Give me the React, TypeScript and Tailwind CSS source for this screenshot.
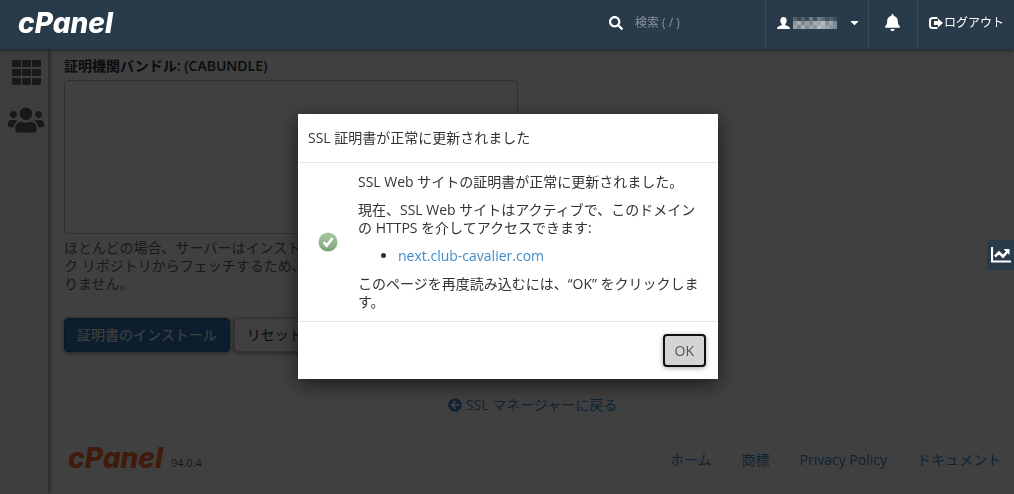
import { FaArrowCircleLeft, FaBell, FaCaretDown, FaSearch, FaUsers } from 'react-icons/fa';

const footerLinks = ['ホーム', '商標', 'Privacy Policy', 'ドキュメント'];

// shades of the masked user name, row by row
const maskRows = [
  ['#53616f', '#3a4958', '#53616f', '#3a4958', '#6d7986', '#46535f', '#6d7986', '#5c6976', '#46535f', '#53616f', '#3f4e5d'],
  ['#8b949e', '#a3abb3', '#7b8691', '#99a2ab', '#7b8691', '#a3abb3', '#9aa3ac', '#b4bac1', '#828d98', '#9aa3ac', '#7b8691'],
  ['#9aa3ac', '#7b8691', '#a3abb3', '#828d98', '#99a2ab', '#8b949e', '#b4bac1', '#a3abb3', '#9aa3ac', '#8b949e', '#828d98'],
];

function Wordmark({ className }: { className: string }) {
  return <span className={`font-[Inter] text-[28px] leading-7 font-extrabold italic ${className}`}>cPanel</span>;
}

function GridIcon() {
  return (
    <svg width="29" height="25" viewBox="0 0 29 25" fill="currentColor" aria-hidden="true">
      {[0, 9, 18].map((y) =>
        [0, 10, 20].map((x) => <rect key={`${x}-${y}`} x={x} y={y} width="9" height="7" rx="1" />),
      )}
    </svg>
  );
}

function UserIcon() {
  return (
    <svg width="13" height="12" viewBox="0 0 13 12" fill="currentColor" aria-hidden="true">
      <path d="M6.5 0C4.500 0 3.300 1.400 3.300 3.400c0 1.500.6 2.900 1.500 3.700v1L1 9.700Q0 10.200 0 12h13q0-1.800-1-2.300L8.200 8.100v-1c.9-.8 1.500-2.200 1.500-3.700C9.700 1.400 8.500 0 6.500 0z" />
    </svg>
  );
}

function LogoutIcon() {
  return (
    <svg width="14" height="12" viewBox="0 0 14 12" aria-hidden="true">
      <path d="M8.500 1H3.500Q1 1 1 3.500v5Q1 11 3.500 11h5" fill="none" stroke="currentColor" strokeWidth="2" />
      <path d="M9 1.500L14 6 9 10.500V8H5V4h4z" fill="currentColor" />
    </svg>
  );
}

function SuccessIcon() {
  return (
    <svg width="20" height="20" viewBox="0 0 20 20" role="img" aria-label="成功">
      <defs>
        <linearGradient id="ok-fill" x1="0" y1="0" x2="0" y2="1">
          <stop offset="0" stopColor="#a9c7a0" />
          <stop offset="1" stopColor="#7fa67b" />
        </linearGradient>
      </defs>
      <circle cx="10" cy="10" r="9.500" fill="url(#ok-fill)" />
      <path d="M.8 11.500a9.400 9.400 0 0 0 18.400 0A10 10 0 0 1 .8 11.500z" fill="#6f946d" opacity=".5" />
      <path d="M5.500 10l3.200 3.600L14.500 6" fill="none" stroke="#fff" strokeWidth="2.600" />
    </svg>
  );
}

function ChartIcon() {
  return (
    <svg width="20" height="16" viewBox="0 0 20 16" fill="none" stroke="#fff" aria-hidden="true">
      <path d="M1 0v14.500h19" strokeWidth="2.200" />
      <path d="M4 9.500l4-4 4 4 4-4.500" strokeWidth="2.600" />
      <path d="M12.500 2H18.500v6z" fill="#fff" stroke="none" />
    </svg>
  );
}

function Header() {
  return (
    <header className="relative z-30 flex h-[49px] items-stretch bg-[#293a4a] text-xs text-white shadow-[0_1px_4px_rgba(0,0,0,0.5)]">
      <a href="#" className="flex items-center pl-[18px]">
        <Wordmark className="pb-1 text-white" />
      </a>
      <label className="ml-auto flex w-[156px] items-center gap-3 pb-1">
        <FaSearch size={14} />
        <input
          type="search"
          aria-label="検索"
          placeholder="検索 ( / )"
          className="w-28 bg-transparent outline-none placeholder:text-[#8a9199]"
        />
      </label>
      <button type="button" aria-label="ユーザー" className="flex w-[103px] items-center gap-[3px] border-l border-[#364859] pb-1 pl-[11px]">
        <UserIcon />
        <svg width="44" height="12" viewBox="0 0 44 12" aria-hidden="true">
          {maskRows.map((row, y) =>
            row.map((fill, x) => <rect key={`${x}-${y}`} x={x * 4} y={y * 4} width="4" height="4" fill={fill} />),
          )}
        </svg>
        <FaCaretDown size={13} className="ml-2" />
      </button>
      <button type="button" aria-label="通知" className="flex w-[49px] items-center justify-center border-l border-[#364859] pb-1">
        <FaBell size={17} />
      </button>
      <a href="#" className="flex items-center gap-px border-l border-[#364859] pr-2.5 pb-1 pl-[11px]">
        <LogoutIcon />
        ログアウト
      </a>
    </header>
  );
}

function Sidebar() {
  return (
    <nav className="flex w-12 shrink-0 flex-col items-center gap-[17px] bg-[#f5f5f5] pt-[11px] pl-1 text-[#666] shadow-[1px_0_5px_rgba(0,0,0,0.5)]">
      <a href="#" aria-label="ツール">
        <GridIcon />
      </a>
      <a href="#" aria-label="ユーザー マネージャー">
        <FaUsers size={36} />
      </a>
    </nav>
  );
}

function SuccessDialog() {
  return (
    <div className="fixed inset-0 z-20 flex items-start justify-center bg-black/75 pt-[114px] pl-0.5">
      <div role="dialog" aria-labelledby="dialog-title" className="w-[420px] bg-white text-[#333] shadow-[0_5px_20px_rgba(0,0,0,0.6)]">
        <h2 id="dialog-title" className="border-b border-[#e5e5e5] px-2.5 py-[15px]">
          SSL 証明書が正常に更新されました
        </h2>
        <div className="flex items-center p-2.5">
          <div className="w-[50px] shrink-0 pl-2.5">
            <SuccessIcon />
          </div>
          <div className="flex flex-col gap-2.5">
            <p>SSL Web サイトの証明書が正常に更新されました。</p>
            <p>現在、SSL Web サイトはアクティブで、このドメインの HTTPS を介してアクセスできます:</p>
            <ul className="list-disc pl-10">
              <li>
                <a href="#" className="text-[#428bca]">next.club-cavalier.com</a>
              </li>
            </ul>
            <p>このページを再度読み込むには、“OK” をクリックします。</p>
          </div>
        </div>
        <div className="flex justify-end border-t border-[#e5e5e5] p-3">
          <button
            type="button"
            className="h-[33px] rounded border-2 border-[#101010] bg-[#d4d4d4] px-2.5 text-[#555] shadow-[0_1px_5px_rgba(0,0,0,0.35)]"
          >
            OK
          </button>
        </div>
      </div>
    </div>
  );
}

export default function App() {
  return (
    <div
      lang="ja"
      className="flex min-h-screen flex-col bg-white font-['Open_Sans','Noto_Sans_CJK_JP',sans-serif] text-sm leading-[18px] text-[#333]"
    >
      <Header />
      <div className="flex flex-1">
        <Sidebar />
        <main className="flex flex-1 flex-col pt-2 pr-[13px] pl-4">
          <form>
            <label htmlFor="cabundle" className="block font-semibold">
              証明機関バンドル: (CABUNDLE)
            </label>
            <textarea
              id="cabundle"
              className="mt-[5px] block h-[154px] w-full max-w-[454px] resize-none rounded border border-[#bbb] bg-white"
            />
            <p className="mt-[5px] max-w-[454px] text-[#666]">
              ほとんどの場合、サーバーはインストール中に CA バンドルをパブリック リポジトリからフェッチするため、このボックスに入力する必要はありません。
            </p>
            <div className="mt-[25px] flex gap-1">
              <button
                type="button"
                className="h-[34px] rounded-sm border border-[#285e8e] bg-[#337ab7] px-3 text-white shadow-[0_1px_4px_rgba(0,0,0,0.5)]"
              >
                証明書のインストール
              </button>
              <button
                type="reset"
                className="h-[34px] rounded-sm border border-[#ccc] bg-white px-3 shadow-[0_1px_4px_rgba(0,0,0,0.5)]"
              >
                リセット
              </button>
            </div>
          </form>
          <a href="#" className="mt-11 flex items-center gap-1 self-center text-[#428bca]">
            <FaArrowCircleLeft size={14} />
            SSL マネージャーに戻る
          </a>
          <footer className="mt-[30px] flex items-center justify-between pl-1">
            <div className="flex items-end gap-2">
              <Wordmark className="text-[#ff6c2c]" />
              <span className="text-[11px] text-[#666]">94.0.4</span>
            </div>
            <div className="flex gap-[30px] pt-1 text-[#428bca]">
              {footerLinks.map((label) => (
                <a key={label} href="#">
                  {label}
                </a>
              ))}
            </div>
          </footer>
        </main>
      </div>
      <SuccessDialog />
      <button
        type="button"
        aria-label="統計"
        className="fixed top-60 right-0 z-30 flex h-[30px] w-[27px] items-center justify-center rounded-l bg-[#293a4a]"
      >
        <ChartIcon />
      </button>
    </div>
  );
}
